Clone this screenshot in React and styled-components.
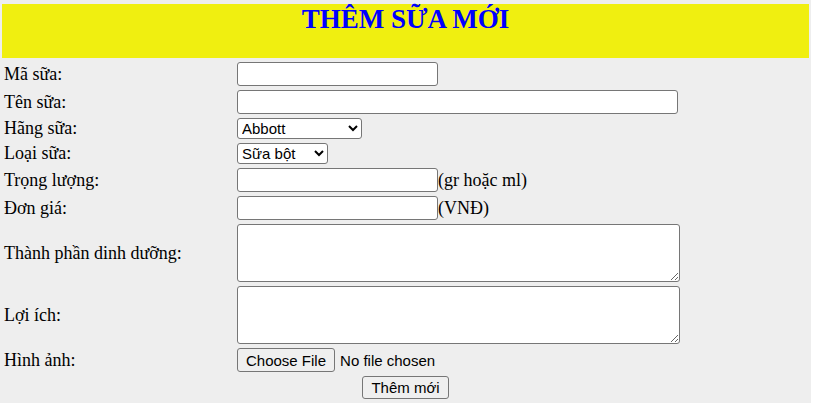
import React from "react";
import styled, { createGlobalStyle } from "styled-components";

const GlobalStyle = createGlobalStyle`
  body {
    margin: 0;
    background: #ffffff;
    font-family: "Liberation Serif", "Times New Roman", serif;
  }
`;

const App = () => {
  return (
    <>
      <GlobalStyle />
      <FormBox onSubmit={(ev) => ev.preventDefault()}>
        <Title>THÊM SỮA MỚI</Title>

        <Row>
          <Label>Mã sữa:</Label>
          <Cell>
            <TextInput type="text" $w={201} />
          </Cell>
        </Row>

        <Row>
          <Label>Tên sữa:</Label>
          <Cell>
            <TextInput type="text" $w={441} />
          </Cell>
        </Row>

        <Row>
          <Label>Hãng sữa:</Label>
          <Cell>
            <Select $w={125} defaultValue="Abbott">
              <option>Abbott</option>
              <option>Vinamilk</option>
              <option>Nutifood</option>
              <option>Dutch Lady</option>
            </Select>
          </Cell>
        </Row>

        <Row>
          <Label>Loại sữa:</Label>
          <Cell>
            <Select $w={91} defaultValue="Sữa bột">
              <option>Sữa bột</option>
              <option>Sữa tươi</option>
              <option>Sữa chua</option>
            </Select>
          </Cell>
        </Row>

        <Row>
          <Label>Trọng lượng:</Label>
          <Cell>
            <TextInput type="text" $w={201} />
            <Unit>(gr hoặc ml)</Unit>
          </Cell>
        </Row>

        <Row>
          <Label>Đơn giá:</Label>
          <Cell>
            <TextInput type="text" $w={201} />
            <Unit>(VNĐ)</Unit>
          </Cell>
        </Row>

        <Row>
          <Label>Thành phần dinh dưỡng:</Label>
          <Cell>
            <TextArea />
          </Cell>
        </Row>

        <Row>
          <Label>Lợi ích:</Label>
          <Cell>
            <TextArea />
          </Cell>
        </Row>

        <Row>
          <Label>Hình ảnh:</Label>
          <Cell>
            <FileInput type="file" />
          </Cell>
        </Row>

        <SubmitRow>
          <SubmitButton type="submit">Thêm mới</SubmitButton>
        </SubmitRow>
      </FormBox>
    </>
  );
};

const FormBox = styled.form`
  width: 807px;
  padding: 4px 2px 4px 2px;
  background: #eeeeee;
  display: flex;
  flex-direction: column;
  gap: 4px;
`;

const Title = styled.h2`
  margin: 0;
  height: 54px;
  background: #f0ef10;
  color: #0000ff;
  font-family: "Liberation Serif", "Times New Roman", serif;
  font-size: 27px;
  font-weight: bold;
  line-height: 31px;
  text-align: center;
`;

const Row = styled.div`
  display: grid;
  grid-template-columns: 233px 1fr;
  column-gap: 2px;
  align-items: center;
`;

const Label = styled.div`
  padding-left: 2px;
  font-size: 18px;
  color: #000000;
`;

const Cell = styled.div`
  display: flex;
  align-items: center;
`;

const TextInput = styled.input`
  box-sizing: border-box;
  width: ${(p) => p.$w}px;
  height: 24px;
  margin: 0;
  padding: 1px 3px;
  border: 1px solid #767676;
  border-radius: 3px;
  background: #ffffff;
  font-family: "Liberation Sans", Arial, sans-serif;
  font-size: 15px;
`;

const Unit = styled.span`
  font-size: 18px;
  color: #000000;
`;

const Select = styled.select`
  box-sizing: border-box;
  width: ${(p) => p.$w}px;
  height: 21px;
  margin: 0;
  border: 1px solid #767676;
  border-radius: 3px;
  background: #ffffff;
  color: #000000;
  font-family: "Liberation Sans", Arial, sans-serif;
  font-size: 15px;
`;

const TextArea = styled.textarea`
  box-sizing: border-box;
  width: 443px;
  height: 58px;
  margin: 0;
  border: 1px solid #767676;
  border-radius: 3px;
  background: #ffffff;
`;

const FileInput = styled.input`
  height: 24px;
  margin: 0;
  font-family: "Liberation Sans", Arial, sans-serif;
  font-size: 15px;
  color: #000000;

  &::file-selector-button {
    box-sizing: border-box;
    height: 24px;
    margin: 0 5px 0 0;
    padding: 1px 8px;
    border: 1px solid #767676;
    border-radius: 3px;
    background: #efefef;
    color: #000000;
    font-family: "Liberation Sans", Arial, sans-serif;
    font-size: 15px;
  }
`;

const SubmitRow = styled.div`
  display: flex;
  justify-content: center;
`;

const SubmitButton = styled.button`
  box-sizing: border-box;
  height: 23px;
  margin: 0;
  padding: 1px 8px;
  border: 1px solid #767676;
  border-radius: 3px;
  background: #efefef;
  color: #000000;
  font-family: "Liberation Sans", Arial, sans-serif;
  font-size: 15px;
`;

export default App;
